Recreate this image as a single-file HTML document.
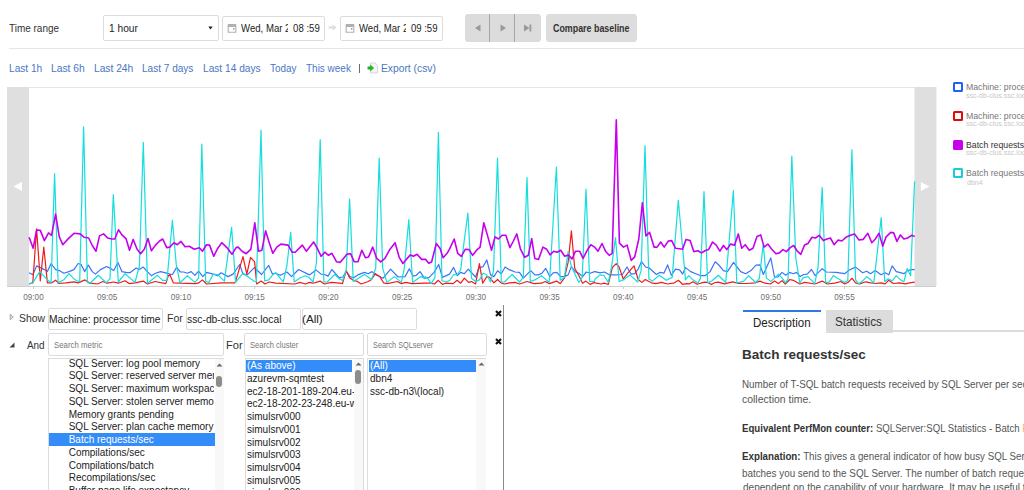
<!DOCTYPE html>
<html><head><meta charset="utf-8">
<style>
*{box-sizing:border-box;margin:0;padding:0}
html,body{width:1024px;height:490px;overflow:hidden;background:#fff}
body{font-family:"Liberation Sans",sans-serif;color:#333;position:relative}
.a{position:absolute}
.t{position:absolute;white-space:nowrap;line-height:1;transform-origin:0 0}
.box{position:absolute;border:1px solid #dcdcdc;border-radius:2px;background:#fff}
</style></head><body>

<!-- header row -->
<div class="box" style="left:103px;top:15px;width:116px;height:26px"></div>
<svg class="a" style="left:208px;top:26px" width="5" height="4" viewBox="0 0 5 4"><path d="M0.3 0.5 L4.7 0.5 L2.5 3.5Z" fill="#222"/></svg>
<div class="box" style="left:222px;top:15.5px;width:103px;height:25px"></div>
<svg class="a" style="left:227px;top:23px" width="10" height="10" viewBox="0 0 10 10"><path d="M1.2 3.5 V9.2 H8.8 V3.5" fill="none" stroke="#b0b0b0" stroke-width="1.1"/><path d="M0.7 1.6 Q0.7 1 1.3 1 H3 Q3.4 0.4 3.9 1 H6.1 Q6.6 0.4 7 1 H8.7 Q9.3 1 9.3 1.6 V3.9 H0.7Z" fill="#b0b0b0"/><rect x="6" y="5.2" width="1.4" height="1.4" fill="#888"/></svg>
<svg class="a" style="left:328px;top:24px" width="9" height="7" viewBox="0 0 9 7"><path d="M0.5 2.5 H4.5 V0.5 L8.5 3.5 L4.5 6.5 V4.5 H0.5Z" fill="#ddd"/></svg>
<div class="box" style="left:339.5px;top:15.5px;width:103.5px;height:25px"></div>
<svg class="a" style="left:345px;top:23px" width="10" height="10" viewBox="0 0 10 10"><path d="M1.2 3.5 V9.2 H8.8 V3.5" fill="none" stroke="#b0b0b0" stroke-width="1.1"/><path d="M0.7 1.6 Q0.7 1 1.3 1 H3 Q3.4 0.4 3.9 1 H6.1 Q6.6 0.4 7 1 H8.7 Q9.3 1 9.3 1.6 V3.9 H0.7Z" fill="#b0b0b0"/><rect x="6" y="5.2" width="1.4" height="1.4" fill="#888"/></svg>
<div class="a" style="left:465px;top:14.3px;width:75.5px;height:27.6px;background:#dcdcdc;border-radius:3px">
  <div class="a" style="left:24px;top:0;width:1px;height:27.5px;background:#a6a6a6"></div>
  <div class="a" style="left:49px;top:0;width:1px;height:27.5px;background:#a6a6a6"></div>
  <svg class="a" style="left:9px;top:9.5px" width="8" height="8" viewBox="0 0 8 8"><path d="M1 4 L6.5 0.5 L6.5 7.5Z" fill="#999"/></svg>
  <svg class="a" style="left:34px;top:9.5px" width="8" height="8" viewBox="0 0 8 8"><path d="M1.5 0.5 L7 4 L1.5 7.5Z" fill="#999"/></svg>
  <svg class="a" style="left:58px;top:9.5px" width="10" height="8" viewBox="0 0 10 8"><path d="M1 0.5 L6.5 4 L1 7.5Z" fill="#999"/><rect x="6.5" y="0.5" width="1.8" height="7" fill="#999"/></svg>
</div>
<div class="a" style="left:546px;top:14.3px;width:91px;height:27.6px;background:#dddddd;border-radius:3px"></div>
<div class="a" style="left:9px;top:48px;width:1015px;height:1px;background:#e6e6e6"></div>

<div class="a" style="left:359px;top:63.5px;width:1px;height:9px;background:#6a6a6a"></div>
<svg class="a" style="left:367px;top:62px" width="12" height="12" viewBox="0 0 12 12"><path d="M3.5 1 H8 L10.5 3.5 V11 H3.5Z" fill="#f4f4f4" stroke="#cfcfcf" stroke-width="0.8"/><path d="M0.8 4.8 H3.3 V3 L6.8 6 L3.3 9 V7.2 H0.8Z" fill="#22b422" stroke="#22b422" stroke-width="0.5" stroke-linejoin="round"/></svg>

<!-- chart -->
<svg class="a" style="left:0;top:0" width="1024" height="310" viewBox="0 0 1024 310">
  <line x1="7" y1="87.5" x2="936" y2="87.5" stroke="#e6e6e6" stroke-width="1"/>
  <rect x="7" y="87" width="22" height="199" fill="#dfdfdf"/>
  <rect x="914.5" y="87" width="22" height="199" fill="#dfdfdf"/>
  <path d="M13.6 186.4 L22 181.7 L22 191.1Z" fill="#fff"/>
  <path d="M929.6 186.4 L920.8 181.9 L920.8 190.9Z" fill="#fff"/>
  <polyline points="29.1,272.7 32.8,274.7 36.6,265.9 40.3,267.6 44.4,269.6 47.4,271.6 51.1,263.5 55.6,269.6 59.3,270.6 63.8,273.3 68.9,271.6 74.0,269.6 78.1,263.5 81.1,264.5 84.6,271.6 88.3,265.1 92.3,271.6 95.4,274.1 100.5,269.6 106.6,266.5 110.7,268.6 113.8,270.6 117.9,262.4 121.9,271.6 127.0,272.7 130.0,272.7 136.1,268.0 139.2,269.6 143.3,267.1 147.3,271.6 151.4,275.7 155.5,273.3 160.6,271.6 164.7,272.7 170.0,274.1 172.5,274.5 176.6,267.4 180.4,272.0 183.7,272.0 187.4,273.2 191.2,271.6 194.9,275.3 198.6,271.2 202.8,276.6 206.5,272.4 213.2,274.1 217.7,275.7 221.0,272.8 228.1,276.6 233.1,274.1 239.7,264.5 243.0,274.1 247.2,274.9 254.6,267.4 255.0,268.3 261.6,274.5 268.7,265.4 272.4,274.1 275.7,273.2 280.3,275.3 287.0,272.0 291.5,276.6 298.6,269.5 309.4,274.9 316.0,269.9 321.0,274.1 324.7,274.5 328.0,276.1 331.8,269.5 339.6,278.2 340.0,277.4 342.9,277.0 346.2,271.2 350.0,276.6 353.7,277.8 357.8,274.9 364.5,272.4 368.2,273.7 372.0,271.6 376.5,275.3 383.2,278.2 390.6,269.1 398.1,277.0 405.1,276.6 409.3,268.7 413.0,276.1 416.3,275.3 420.1,271.6 424.6,278.6 425.0,278.2 429.1,277.4 434.1,272.4 438.7,264.5 442.4,277.4 449.5,274.1 453.6,267.4 457.4,275.7 460.7,272.4 464.4,273.7 468.2,269.1 475.6,277.0 478.9,267.8 483.1,266.6 486.8,260.0 490.6,274.9 493.9,276.6 497.6,270.7 501.3,273.7 505.1,267.0 509.6,269.9 510.0,269.9 515.0,272.0 519.5,272.4 523.3,278.2 530.7,270.7 534.9,274.9 538.2,274.9 542.0,273.2 545.7,268.3 549.8,276.6 553.2,272.8 556.9,272.4 560.6,276.6 564.4,276.6 568.1,274.9 571.4,266.6 575.6,272.0 578.9,273.2 582.6,276.6 586.3,272.0 590.1,273.2 594.6,271.6 595.0,271.6 600.0,272.8 604.5,272.0 609.5,274.9 615.7,274.9 622.4,274.5 627.0,267.0 631.1,274.1 634.8,273.7 638.2,269.1 641.5,261.6 645.6,267.0 648.9,267.8 656.4,274.5 659.7,272.4 663.9,273.2 667.6,264.9 671.3,275.3 675.5,269.1 679.6,269.9 682.6,274.1 685.6,267.6 690.7,271.6 695.8,273.7 700.9,275.7 705.0,275.7 710.1,271.6 715.2,261.8 719.3,265.5 723.4,270.6 727.4,271.6 733.6,262.4 736.6,266.5 740.7,271.6 745.8,273.7 750.9,270.6 756.0,265.1 760.0,264.9 763.3,274.5 770.8,257.9 774.5,277.0 777.8,277.0 782.0,272.4 785.7,275.3 789.5,272.4 793.2,273.7 796.5,272.4 800.2,276.6 803.6,274.5 807.3,274.1 811.5,269.5 815.2,275.7 822.2,268.7 826.4,272.0 836.3,272.4 844.6,273.7 849.4,270.0 855.5,267.1 862.7,272.7 866.7,271.2 870.4,273.7 875.3,270.6 881.0,274.7 885.1,272.7 888.8,274.7 892.2,265.9 896.3,271.6 900.4,272.7 903.9,273.7 907.6,270.6 911.6,269.6 914.7,269.6" fill="none" stroke="#3b74fa" stroke-width="1.2" stroke-linejoin="round"/>
<polyline points="29.1,283.9 32.8,282.9 36.6,228.8 40.3,280.8 43.8,247.1 47.4,282.9 51.5,282.9 55.6,280.2 58.7,283.5 65.8,282.9 74.0,281.8 78.1,282.9 85.0,279.9 90.0,283.2 97.5,284.0 102.8,281.5 107.0,283.2 113.6,282.0 118.3,283.2 125.0,280.7 129.2,283.6 135.0,282.8 143.3,281.1 147.5,284.0 155.0,281.5 165.8,283.6 168.3,275.7 170.0,274.9 173.3,282.8 180.0,283.2 194.9,283.6 198.2,283.2 202.4,279.9 206.5,284.0 221.5,282.8 235.1,282.8 243.0,256.6 246.8,274.1 250.5,257.5 254.6,261.6 256.7,284.0 261.2,281.1 265.0,284.0 269.1,282.0 275.7,283.2 294.8,284.0 299.8,282.4 305.6,284.0 309.4,282.4 313.1,283.2 320.1,281.1 324.3,284.0 331.3,282.4 339.6,283.2 340.0,283.2 342.5,283.6 346.2,270.7 349.5,277.8 353.3,280.3 356.6,281.1 361.2,284.0 368.2,281.5 371.5,279.5 375.3,273.7 379.8,276.6 383.6,282.8 387.3,283.6 397.3,281.5 401.4,283.6 405.6,282.4 412.2,283.6 424.6,283.2 425.0,283.2 430.0,283.2 434.5,284.0 438.3,280.3 442.4,284.4 445.7,283.2 453.2,283.6 457.0,280.3 460.7,283.2 464.4,278.2 468.6,282.4 471.5,281.5 475.6,284.0 479.4,263.7 482.7,283.2 486.8,276.6 489.7,277.4 493.9,282.8 497.6,279.5 501.3,283.2 504.7,284.0 509.6,282.8 510.0,282.8 515.0,282.4 519.5,284.0 527.0,281.5 534.1,283.6 541.5,283.2 545.3,281.5 549.4,283.6 556.5,281.1 560.2,283.6 564.4,278.2 568.1,262.4 571.4,230.8 574.7,268.3 578.9,275.7 582.6,283.2 585.9,281.1 590.1,284.4 594.6,282.4 595.0,282.8 600.8,284.0 604.5,283.2 608.3,284.4 612.4,267.4 616.2,263.7 619.1,267.0 623.2,279.0 627.8,273.2 634.0,265.8 638.2,279.5 641.9,282.4 645.2,279.5 651.4,282.8 656.0,283.6 661.4,282.4 667.6,284.0 674.3,282.8 678.4,280.3 682.5,284.3 686.4,283.6 689.3,283.9 692.9,281.8 697.1,284.3 700.7,283.2 705.0,282.1 707.9,282.5 711.4,284.6 715.0,282.5 718.3,282.2 724.4,283.9 732.6,281.8 738.7,283.5 746.8,283.5 755.0,282.9 760.0,281.1 765.0,283.2 770.4,284.0 774.5,281.1 778.3,283.6 782.0,280.7 785.3,284.0 789.9,279.5 793.2,280.3 799.8,284.0 804.8,282.4 814.8,284.0 822.2,281.1 827.2,284.0 834.7,283.2 840.9,281.5 844.6,284.0 848.4,282.2 852.0,278.2 855.5,282.9 859.6,283.9 865.7,281.8 870.8,282.9 874.9,283.5 881.0,282.9 885.1,283.9 888.8,280.2 893.3,283.5 899.4,282.9 905.5,283.9 909.6,282.9 914.7,282.2" fill="none" stroke="#ee1b1b" stroke-width="1.2" stroke-linejoin="round"/>
<polyline points="29.1,283.9 32.8,282.9 39.7,271.6 47.4,279.8 51.1,282.9 54.6,173.7 58.1,282.9 63.8,279.8 68.9,273.7 75.0,279.8 79.7,281.8 83.6,126.8 87.4,282.6 90.0,283.2 98.3,275.3 106.2,282.8 110.0,278.6 113.3,194.6 118.3,282.0 125.0,273.7 135.0,282.4 139.4,266.0 143.3,142.3 147.5,283.2 157.5,275.3 162.5,280.3 167.0,280.3 172.4,220.2 176.3,265.0 180.0,282.8 187.4,275.7 194.9,282.4 198.6,278.2 201.8,144.0 205.7,281.5 209.0,282.4 213.2,274.1 218.1,274.9 224.4,281.1 231.6,227.3 235.6,282.4 243.0,273.2 254.6,281.5 256.4,281.8 261.0,130.2 264.6,280.8 268.7,279.8 272.8,274.7 275.8,272.7 279.9,277.8 283.2,282.0 287.0,265.0 290.7,232.3 294.2,282.0 300.3,277.8 305.4,275.7 309.5,277.8 313.1,282.0 316.4,263.0 320.2,139.6 323.9,282.0 327.2,282.0 334.7,274.5 339.6,279.0 340.0,278.6 342.5,280.7 346.2,270.7 349.6,199.2 353.3,281.5 364.5,274.5 371.5,279.5 375.7,268.3 379.2,158.2 382.7,268.3 386.9,282.4 394.4,276.6 401.4,282.4 404.3,268.3 408.8,219.6 412.6,282.4 420.9,276.6 424.6,278.2 425.0,276.6 427.9,278.6 431.2,283.6 435.0,277.4 438.4,132.3 442.0,280.7 446.2,282.0 449.9,280.3 453.6,274.5 457.0,274.9 460.7,269.9 464.3,240.0 467.9,213.0 471.5,278.2 475.6,281.5 479.4,279.9 483.1,273.2 486.4,274.5 490.6,282.0 493.5,270.7 497.5,158.2 501.3,282.0 504.7,282.0 509.6,276.6 510.0,276.6 512.1,274.5 519.5,282.0 523.3,277.4 527.0,177.5 530.3,281.5 534.9,279.9 541.5,275.7 549.0,282.4 549.9,275.7 556.4,167.0 560.2,280.3 564.4,277.4 568.1,251.7 571.4,266.6 578.9,282.4 582.2,277.4 586.0,189.2 589.7,281.5 594.6,281.5 595.0,279.0 600.0,274.9 604.1,275.7 608.3,282.4 611.6,266.6 615.5,237.7 619.1,281.5 623.2,279.9 629.9,274.9 637.7,282.0 641.1,270.7 645.0,145.7 648.9,279.0 652.3,281.1 659.3,275.3 666.4,280.3 672.2,277.4 678.3,200.3 685.5,280.0 688.7,275.7 692.8,279.8 697.9,282.9 700.3,278.9 704.0,191.5 707.7,282.9 712.1,280.8 718.3,275.3 725.7,282.5 733.4,190.5 736.8,282.9 743.6,281.4 748.6,275.7 755.7,282.5 759.3,278.6 763.2,244.5 766.4,277.9 770.7,281.4 775.0,277.9 778.4,274.1 782.0,277.8 785.5,282.9 788.1,278.9 791.8,156.1 795.8,258.0 799.8,283.2 802.9,277.8 808.0,276.7 814.8,283.6 818.1,266.6 822.2,187.5 825.6,282.4 828.9,282.4 833.4,275.7 844.6,282.4 847.8,280.8 851.9,149.9 855.6,279.9 858.6,283.9 862.7,280.8 866.7,276.7 870.8,279.8 873.8,283.2 881.2,217.6 884.7,281.4 888.2,278.8 892.2,280.8 896.3,275.7 900.4,279.8 903.9,281.8 907.1,268.6 910.6,275.7 914.6,181.2" fill="none" stroke="#14dede" stroke-width="1.2" stroke-linejoin="round"/>
<polyline points="29.1,237.3 33.2,248.2 36.6,230.0 40.3,230.4 44.4,240.6 48.5,232.9 51.5,235.3 55.6,214.1 59.3,236.9 62.8,244.7 68.3,238.6 74.0,233.3 80.1,233.9 84.2,237.3 88.7,238.0 92.3,245.5 96.0,251.2 99.5,235.9 103.6,233.9 107.7,238.0 111.7,239.0 114.8,239.0 118.5,229.8 121.9,234.9 126.0,238.6 129.5,250.2 133.1,239.4 137.1,249.2 140.6,253.7 144.3,249.2 148.0,238.6 151.4,250.8 155.5,245.1 159.6,241.0 162.7,239.0 166.7,247.6 169.8,247.1 173.9,242.7 177.3,244.7 181.0,241.4 185.1,246.7 189.2,246.3 194.3,249.2 199.4,247.8 202.4,251.2 206.5,244.7 209.6,245.1 213.7,256.3 217.8,248.2 221.8,242.7 226.9,247.6 232.0,254.3 236.1,247.6 238.1,247.1 242.1,251.2 246.2,253.7 250.9,249.2 254.8,222.7 258.5,251.2 261.9,250.2 265.6,230.8 269.3,243.1 272.8,253.3 276.8,247.1 280.9,244.1 288.1,245.1 292.1,252.2 295.2,252.2 302.3,245.1 306.4,251.2 313.6,242.0 317.7,249.2 321.1,256.3 324.8,252.2 328.5,255.3 331.9,253.3 336.6,261.8 340.0,262.4 343.5,258.5 347.1,254.1 350.6,253.7 354.3,261.8 358.0,261.8 361.8,250.2 365.5,257.8 368.6,256.9 372.7,247.1 376.7,258.4 380.8,261.8 384.9,258.4 390.0,249.2 395.1,242.7 399.2,257.3 402.9,263.5 406.3,259.4 410.4,254.9 413.5,256.3 417.1,254.3 421.6,259.4 425.7,259.4 428.7,263.3 431.6,262.0 436.3,243.5 440.0,248.2 443.1,257.8 447.1,253.3 449.5,249.2 454.2,239.0 457.7,253.3 461.3,256.3 465.4,249.2 469.1,249.6 472.6,255.3 476.6,250.2 480.1,247.1 483.8,222.7 487.9,236.9 491.5,250.2 495.0,236.9 498.5,239.0 502.1,235.3 505.8,235.3 509.9,247.6 513.4,241.0 516.8,233.9 520.5,249.2 524.6,257.3 528.3,255.3 531.7,238.6 534.8,258.4 538.5,259.4 543.0,247.1 546.6,249.2 550.1,254.9 553.7,251.2 557.1,252.2 560.6,250.2 564.7,256.3 568.4,254.9 572.0,259.0 575.5,251.2 579.6,251.2 583.1,258.4 586.7,251.2 590.8,244.7 594.5,247.1 598.0,251.2 602.0,243.5 605.5,251.2 609.2,255.3 612.2,253.3 616.3,119.7 619.4,243.1 623.5,247.1 627.1,245.1 631.2,260.4 634.7,256.9 638.8,239.0 642.4,202.7 645.9,235.9 649.6,232.4 654.1,247.1 657.1,247.1 660.7,242.0 664.2,247.1 668.3,241.0 671.7,240.6 675.4,248.2 679.5,248.8 682.6,249.2 686.0,239.4 690.1,240.6 693.8,251.6 697.9,250.8 701.5,252.9 705.0,250.8 708.5,249.6 712.6,242.0 716.2,245.1 719.9,251.2 723.4,245.5 726.8,249.6 730.5,244.1 734.6,245.1 738.3,233.9 741.7,248.2 745.2,244.7 749.3,250.2 753.0,248.2 757.0,236.5 760.7,234.9 764.1,247.1 767.8,244.1 771.8,249.2 775.9,253.7 779.4,252.9 782.9,249.6 786.5,251.6 790.2,247.6 793.7,245.5 797.1,250.8 800.8,254.3 804.5,245.1 808.0,243.5 812.0,237.3 815.5,238.0 819.2,235.3 823.3,240.6 826.9,239.0 830.4,238.0 834.1,244.7 838.2,240.0 841.8,241.0 845.9,237.3 850.4,235.3 854.5,233.9 859.0,240.0 863.1,239.4 867.8,233.3 871.8,242.7 875.3,239.0 879.0,233.3 882.7,246.1 886.1,236.9 890.8,232.4 893.7,232.9 896.9,241.4 900.4,234.9 903.9,239.0 907.6,238.0 911.6,235.3 914.7,236.5" fill="none" stroke="#c600ee" stroke-width="1.6" stroke-linejoin="round"/>
  <line x1="7" y1="286.5" x2="936" y2="286.5" stroke="#d0d0d0" stroke-width="1"/>
  <line x1="33.5" y1="286" x2="33.5" y2="289" stroke="#ccc" stroke-width="1"/><line x1="107.2" y1="286" x2="107.2" y2="289" stroke="#ccc" stroke-width="1"/><line x1="181.0" y1="286" x2="181.0" y2="289" stroke="#ccc" stroke-width="1"/><line x1="254.7" y1="286" x2="254.7" y2="289" stroke="#ccc" stroke-width="1"/><line x1="328.4" y1="286" x2="328.4" y2="289" stroke="#ccc" stroke-width="1"/><line x1="402.2" y1="286" x2="402.2" y2="289" stroke="#ccc" stroke-width="1"/><line x1="475.9" y1="286" x2="475.9" y2="289" stroke="#ccc" stroke-width="1"/><line x1="549.6" y1="286" x2="549.6" y2="289" stroke="#ccc" stroke-width="1"/><line x1="623.3" y1="286" x2="623.3" y2="289" stroke="#ccc" stroke-width="1"/><line x1="697.1" y1="286" x2="697.1" y2="289" stroke="#ccc" stroke-width="1"/><line x1="770.8" y1="286" x2="770.8" y2="289" stroke="#ccc" stroke-width="1"/><line x1="844.5" y1="286" x2="844.5" y2="289" stroke="#ccc" stroke-width="1"/>
  <g font-family="Liberation Sans" font-size="9" fill="#6f6f6f"><text x="23.3" y="300.2" textLength="20.4" lengthAdjust="spacingAndGlyphs">09:00</text><text x="97.0" y="300.2" textLength="20.4" lengthAdjust="spacingAndGlyphs">09:05</text><text x="170.8" y="300.2" textLength="20.4" lengthAdjust="spacingAndGlyphs">09:10</text><text x="244.5" y="300.2" textLength="20.4" lengthAdjust="spacingAndGlyphs">09:15</text><text x="318.2" y="300.2" textLength="20.4" lengthAdjust="spacingAndGlyphs">09:20</text><text x="392.0" y="300.2" textLength="20.4" lengthAdjust="spacingAndGlyphs">09:25</text><text x="465.7" y="300.2" textLength="20.4" lengthAdjust="spacingAndGlyphs">09:30</text><text x="539.4" y="300.2" textLength="20.4" lengthAdjust="spacingAndGlyphs">09:35</text><text x="613.1" y="300.2" textLength="20.4" lengthAdjust="spacingAndGlyphs">09:40</text><text x="686.9" y="300.2" textLength="20.4" lengthAdjust="spacingAndGlyphs">09:45</text><text x="760.6" y="300.2" textLength="20.4" lengthAdjust="spacingAndGlyphs">09:50</text><text x="834.3" y="300.2" textLength="20.4" lengthAdjust="spacingAndGlyphs">09:55</text></g>
</svg>

<!-- legend squares -->
<div class="a" style="left:953px;top:81.5px;width:10px;height:10px;border:2px solid #1f5ffb;border-radius:1.5px"></div>
<div class="a" style="left:953px;top:110.5px;width:10px;height:10px;border:2px solid #e00a0a;border-radius:1.5px"></div>
<div class="a" style="left:953px;top:139.5px;width:10px;height:10px;background:#c800ec;border-radius:1.5px"></div>
<div class="a" style="left:953px;top:168px;width:10px;height:10px;border:2px solid #12d0d6;border-radius:1.5px"></div>

<!-- show row -->
<svg class="a" style="left:9px;top:313px" width="6" height="8" viewBox="0 0 6 8"><path d="M1.2 1.2 L4.3 4 L1.2 6.8Z" fill="#ddd" stroke="#999" stroke-width="0.8"/></svg>
<div class="box" style="left:48px;top:307.6px;width:115px;height:22.8px"></div>
<div class="box" style="left:186px;top:307.6px;width:115px;height:22.8px"></div>
<div class="box" style="left:302px;top:307.6px;width:115px;height:22.8px"></div>
<svg class="a" style="left:493.5px;top:309px" width="9" height="9" viewBox="0 0 9 9"><path d="M2 2 L7 7 M7 2 L2 7" stroke="#111" stroke-width="2.1"/></svg>
<div class="a" style="left:503px;top:304.5px;width:1px;height:186px;background:#8a8a8a"></div>

<!-- and row -->
<svg class="a" style="left:8.7px;top:341.5px" width="6" height="6" viewBox="0 0 6 6"><path d="M0.5 5.5 L5.5 5.5 L5.5 0.5Z" fill="#444"/></svg>
<div class="box" style="left:48px;top:333px;width:176px;height:22.5px"></div>
<div class="box" style="left:244px;top:333px;width:119.5px;height:22.5px"></div>
<div class="box" style="left:367px;top:333px;width:119.5px;height:22.5px"></div>
<svg class="a" style="left:493.5px;top:336.8px" width="9" height="9" viewBox="0 0 9 9"><path d="M2 2 L7 7 M7 2 L2 7" stroke="#111" stroke-width="2.1"/></svg>

<!-- lists -->
<div class="box" style="left:48px;top:358px;width:176px;height:140px;border-radius:0">
  <div class="a" style="left:0;top:74.2px;width:165.5px;height:12.4px;background:#348cf8"></div>
  <div class="a" style="left:165.5px;top:0;width:9px;height:140px;background:#f8f8f8"></div>
  <svg class="a" style="left:166.5px;top:3.5px" width="7" height="4" viewBox="0 0 7 4"><path d="M0.5 3.5 L3.5 0.5 L6.5 3.5Z" fill="#666"/></svg>
  <div class="a" style="left:167px;top:17px;width:6px;height:11px;background:#8c8c8c;border-radius:3px"></div>
</div>
<div class="box" style="left:245px;top:358px;width:119px;height:140px;border-radius:0">
  <div class="a" style="left:0;top:0.5px;width:106.2px;height:12.5px;background:#348cf8"></div>
  <div class="a" style="left:108.3px;top:0;width:9px;height:140px;background:#f8f8f8"></div>
  <svg class="a" style="left:109.3px;top:3.3px" width="7" height="4" viewBox="0 0 7 4"><path d="M0.5 3.5 L3.5 0.5 L6.5 3.5Z" fill="#666"/></svg>
  <div class="a" style="left:109.4px;top:10.8px;width:5.8px;height:14.5px;background:#8c8c8c;border-radius:3px"></div>
</div>
<div class="box" style="left:367px;top:358px;width:119px;height:140px;border-radius:0">
  <div class="a" style="left:0.5px;top:0.7px;width:107px;height:12.3px;background:#348cf8"></div>
  <div class="a" style="left:107.5px;top:0;width:10.5px;height:140px;background:#f8f8f8"></div>
  <svg class="a" style="left:110.3px;top:3.3px" width="7" height="4" viewBox="0 0 7 4"><path d="M0.5 3.5 L3.5 0.5 L6.5 3.5Z" fill="#666"/></svg>
</div>

<!-- right panel: tabs -->
<div class="a" style="left:743px;top:309.7px;width:78px;height:2.4px;background:#2f7ae0"></div>
<div class="a" style="left:825.7px;top:309.7px;width:67.5px;height:23.5px;background:#dcdcdc"></div>
<div class="a" style="left:893px;top:329.7px;width:131px;height:2px;background:#dcdcdc"></div>

<div class="t" style="left:9.10px;top:22.90px;font-size:11px;font-weight:normal;color:#333;transform:scaleX(0.9055)">Time range</div>
<div class="t" style="left:109.07px;top:22.90px;font-size:11px;font-weight:normal;color:#222;transform:scaleX(0.9267)">1 hour</div>
<div class="t" style="left:241.40px;top:23.20px;font-size:11px;font-weight:normal;color:#222;transform:scaleX(0.8722)">Wed, Mar 2 08 :59</div>
<div class="t" style="left:359.10px;top:23.20px;font-size:11px;font-weight:normal;color:#222;transform:scaleX(0.8689)">Wed, Mar 2 09 :59</div>
<div class="t" style="left:553.30px;top:23.30px;font-size:10.5px;font-weight:bold;color:#333;transform:scaleX(0.8456)">Compare baseline</div>
<div class="t" style="left:8.88px;top:62.80px;font-size:11px;font-weight:normal;color:#4a76c4;transform:scaleX(0.9200)">Last 1h</div>
<div class="t" style="left:51.37px;top:62.80px;font-size:11px;font-weight:normal;color:#4a76c4;transform:scaleX(0.9343)">Last 6h</div>
<div class="t" style="left:94.17px;top:62.80px;font-size:11px;font-weight:normal;color:#4a76c4;transform:scaleX(0.9293)">Last 24h</div>
<div class="t" style="left:142.29px;top:62.80px;font-size:11px;font-weight:normal;color:#4a76c4;transform:scaleX(0.9127)">Last 7 days</div>
<div class="t" style="left:202.58px;top:62.80px;font-size:11px;font-weight:normal;color:#4a76c4;transform:scaleX(0.9230)">Last 14 days</div>
<div class="t" style="left:270.00px;top:62.80px;font-size:11px;font-weight:normal;color:#4a76c4;transform:scaleX(0.9000)">Today</div>
<div class="t" style="left:306.30px;top:62.80px;font-size:11px;font-weight:normal;color:#4a76c4;transform:scaleX(0.9061)">This week</div>
<div class="t" style="left:380.76px;top:62.80px;font-size:11px;font-weight:normal;color:#4a76c4;transform:scaleX(0.9351)">Export (csv)</div>
<div class="t" style="left:965.88px;top:81.90px;font-size:9.5px;font-weight:normal;color:#777;transform:scaleX(0.9176)">Machine: processor time</div>
<div class="t" style="left:965.86px;top:91.60px;font-size:7.5px;font-weight:normal;color:#c8c8c8;transform:scaleX(0.9432)">ssc-db-clus.ssc.local</div>
<div class="t" style="left:965.88px;top:110.70px;font-size:9.5px;font-weight:normal;color:#777;transform:scaleX(0.9176)">Machine: processor time</div>
<div class="t" style="left:965.86px;top:120.40px;font-size:7.5px;font-weight:normal;color:#c8c8c8;transform:scaleX(0.9432)">ssc-db-clus.ssc.local</div>
<div class="t" style="left:965.88px;top:139.50px;font-size:9.5px;font-weight:normal;color:#333;transform:scaleX(0.9176)">Batch requests/sec</div>
<div class="t" style="left:965.86px;top:149.20px;font-size:7.5px;font-weight:normal;color:#c8c8c8;transform:scaleX(0.9432)">ssc-db-clus.ssc.local</div>
<div class="t" style="left:965.88px;top:168.30px;font-size:9.5px;font-weight:normal;color:#777;transform:scaleX(0.9176)">Batch requests/sec</div>
<div class="t" style="left:966.80px;top:179.00px;font-size:7.5px;font-weight:normal;color:#c8c8c8;transform:scaleX(0.9432)">dbn4</div>
<div class="t" style="left:18.75px;top:312.90px;font-size:11px;font-weight:normal;color:#333;transform:scaleX(0.9462)">Show</div>
<div class="t" style="left:49.43px;top:314.00px;font-size:10.5px;font-weight:normal;color:#222;transform:scaleX(0.9743)">Machine: processor time</div>
<div class="t" style="left:166.64px;top:313.00px;font-size:11px;font-weight:normal;color:#333;transform:scaleX(0.9600)">For</div>
<div class="t" style="left:187.12px;top:313.80px;font-size:10.5px;font-weight:normal;color:#222;transform:scaleX(0.9811)">ssc-db-clus.ssc.local</div>
<div class="t" style="left:302.39px;top:313.80px;font-size:10.5px;font-weight:normal;color:#222;transform:scaleX(1.1118)">(All)</div>
<div class="t" style="left:27.00px;top:340.40px;font-size:11px;font-weight:normal;color:#333;transform:scaleX(0.9000)">And</div>
<div class="t" style="left:54.09px;top:341.30px;font-size:8.6px;font-weight:normal;color:#777;transform:scaleX(0.9118)">Search metric</div>
<div class="t" style="left:226.49px;top:340.40px;font-size:11px;font-weight:normal;color:#333;transform:scaleX(1.0067)">For</div>
<div class="t" style="left:249.82px;top:341.30px;font-size:8.6px;font-weight:normal;color:#777;transform:scaleX(0.8796)">Search cluster</div>
<div class="t" style="left:372.95px;top:341.30px;font-size:8.6px;font-weight:normal;color:#777;transform:scaleX(0.8507)">Search SQLserver</div>
<div style="position:absolute;left:49px;top:359px;width:164.7px;height:131px;overflow:hidden"><div class="t" style="left:19.70px;top:-0.50px;font-size:10px;font-weight:normal;color:#222;transform:scaleX(1.0000)">SQL Server: log pool memory</div></div>
<div style="position:absolute;left:49px;top:359px;width:164.7px;height:131px;overflow:hidden"><div class="t" style="left:19.70px;top:12.25px;font-size:10px;font-weight:normal;color:#222;transform:scaleX(1.0000)">SQL Server: reserved server memory</div></div>
<div style="position:absolute;left:49px;top:359px;width:164.7px;height:131px;overflow:hidden"><div class="t" style="left:19.70px;top:25.00px;font-size:10px;font-weight:normal;color:#222;transform:scaleX(1.0000)">SQL Server: maximum workspace memory</div></div>
<div style="position:absolute;left:49px;top:359px;width:164.7px;height:131px;overflow:hidden"><div class="t" style="left:19.70px;top:37.75px;font-size:10px;font-weight:normal;color:#222;transform:scaleX(1.0000)">SQL Server: stolen server memory</div></div>
<div style="position:absolute;left:49px;top:359px;width:164.7px;height:131px;overflow:hidden"><div class="t" style="left:19.70px;top:50.50px;font-size:10px;font-weight:normal;color:#222;transform:scaleX(1.0000)">Memory grants pending</div></div>
<div style="position:absolute;left:49px;top:359px;width:164.7px;height:131px;overflow:hidden"><div class="t" style="left:19.70px;top:63.25px;font-size:10px;font-weight:normal;color:#222;transform:scaleX(1.0000)">SQL Server: plan cache memory</div></div>
<div style="position:absolute;left:49px;top:359px;width:164.7px;height:131px;overflow:hidden"><div class="t" style="left:19.70px;top:76.00px;font-size:10px;font-weight:normal;color:#fff;transform:scaleX(1.0000)">Batch requests/sec</div></div>
<div style="position:absolute;left:49px;top:359px;width:164.7px;height:131px;overflow:hidden"><div class="t" style="left:19.70px;top:88.75px;font-size:10px;font-weight:normal;color:#222;transform:scaleX(1.0000)">Compilations/sec</div></div>
<div style="position:absolute;left:49px;top:359px;width:164.7px;height:131px;overflow:hidden"><div class="t" style="left:19.70px;top:101.50px;font-size:10px;font-weight:normal;color:#222;transform:scaleX(1.0000)">Compilations/batch</div></div>
<div style="position:absolute;left:49px;top:359px;width:164.7px;height:131px;overflow:hidden"><div class="t" style="left:19.70px;top:114.25px;font-size:10px;font-weight:normal;color:#222;transform:scaleX(1.0000)">Recompilations/sec</div></div>
<div style="position:absolute;left:49px;top:359px;width:164.7px;height:131px;overflow:hidden"><div class="t" style="left:19.70px;top:127.00px;font-size:10px;font-weight:normal;color:#222;transform:scaleX(1.0000)">Buffer page life expectancy</div></div>
<div style="position:absolute;left:245.5px;top:359px;width:108.30000000000001px;height:131px;overflow:hidden"><div class="t" style="left:1.20px;top:2.30px;font-size:10px;font-weight:normal;color:#fff;transform:scaleX(1.0039)">(As above)</div></div>
<div style="position:absolute;left:245.5px;top:359px;width:108.30000000000001px;height:131px;overflow:hidden"><div class="t" style="left:1.20px;top:15.00px;font-size:10px;font-weight:normal;color:#222;transform:scaleX(1.0039)">azurevm-sqmtest</div></div>
<div style="position:absolute;left:245.5px;top:359px;width:108.30000000000001px;height:131px;overflow:hidden"><div class="t" style="left:1.20px;top:27.70px;font-size:10px;font-weight:normal;color:#222;transform:scaleX(1.0039)">ec2-18-201-189-204.eu-west-1</div></div>
<div style="position:absolute;left:245.5px;top:359px;width:108.30000000000001px;height:131px;overflow:hidden"><div class="t" style="left:1.20px;top:40.40px;font-size:10px;font-weight:normal;color:#222;transform:scaleX(1.0039)">ec2-18-202-23-248.eu-west-1</div></div>
<div style="position:absolute;left:245.5px;top:359px;width:108.30000000000001px;height:131px;overflow:hidden"><div class="t" style="left:1.20px;top:53.10px;font-size:10px;font-weight:normal;color:#222;transform:scaleX(1.0039)">simulsrv000</div></div>
<div style="position:absolute;left:245.5px;top:359px;width:108.30000000000001px;height:131px;overflow:hidden"><div class="t" style="left:1.20px;top:65.80px;font-size:10px;font-weight:normal;color:#222;transform:scaleX(1.0039)">simulsrv001</div></div>
<div style="position:absolute;left:245.5px;top:359px;width:108.30000000000001px;height:131px;overflow:hidden"><div class="t" style="left:1.20px;top:78.50px;font-size:10px;font-weight:normal;color:#222;transform:scaleX(1.0039)">simulsrv002</div></div>
<div style="position:absolute;left:245.5px;top:359px;width:108.30000000000001px;height:131px;overflow:hidden"><div class="t" style="left:1.20px;top:91.20px;font-size:10px;font-weight:normal;color:#222;transform:scaleX(1.0039)">simulsrv003</div></div>
<div style="position:absolute;left:245.5px;top:359px;width:108.30000000000001px;height:131px;overflow:hidden"><div class="t" style="left:1.20px;top:103.90px;font-size:10px;font-weight:normal;color:#222;transform:scaleX(1.0039)">simulsrv004</div></div>
<div style="position:absolute;left:245.5px;top:359px;width:108.30000000000001px;height:131px;overflow:hidden"><div class="t" style="left:1.20px;top:116.60px;font-size:10px;font-weight:normal;color:#222;transform:scaleX(1.0039)">simulsrv005</div></div>
<div style="position:absolute;left:245.5px;top:359px;width:108.30000000000001px;height:131px;overflow:hidden"><div class="t" style="left:1.20px;top:129.30px;font-size:10px;font-weight:normal;color:#222;transform:scaleX(1.0039)">simulsrv006</div></div>
<div class="t" style="left:369.60px;top:361.30px;font-size:10px;font-weight:normal;color:#fff;transform:scaleX(1.0039)">(All)</div>
<div class="t" style="left:369.60px;top:374.00px;font-size:10px;font-weight:normal;color:#222;transform:scaleX(1.0039)">dbn4</div>
<div class="t" style="left:369.60px;top:386.70px;font-size:10px;font-weight:normal;color:#222;transform:scaleX(1.0039)">ssc-db-n3\(local)</div>
<div class="t" style="left:753.44px;top:317.00px;font-size:12px;font-weight:normal;color:#222;transform:scaleX(0.9586)">Description</div>
<div class="t" style="left:835.42px;top:316.20px;font-size:12px;font-weight:normal;color:#333;transform:scaleX(0.9766)">Statistics</div>
<div class="t" style="left:742.06px;top:348.40px;font-size:13px;font-weight:bold;color:#333;transform:scaleX(1.0390)">Batch requests/sec</div>
<div class="t" style="left:742.36px;top:378.90px;font-size:10.5px;font-weight:normal;color:#555;transform:scaleX(0.9359)">Number of T-SQL batch requests received by SQL Server per second, averaged over the</div>
<div class="t" style="left:742.30px;top:393.90px;font-size:10.5px;font-weight:normal;color:#555;transform:scaleX(0.9956)">collection time.</div>
<div class="t" style="left:742.38px;top:423.00px;font-size:10.5px;font-weight:normal;color:#555;transform:scaleX(0.9179)"><b style="color:#333">Equivalent PerfMon counter:</b> SQLServer:SQL Statistics - Batch <span style="color:#f8b37c">Requests/sec</span></div>
<div class="t" style="left:742.37px;top:451.30px;font-size:10.5px;font-weight:normal;color:#555;transform:scaleX(0.9299)"><b style="color:#333">Explanation:</b> This gives a general indicator of how busy SQL Server is based on the number of</div>
<div class="t" style="left:742.36px;top:467.50px;font-size:10.5px;font-weight:normal;color:#555;transform:scaleX(0.9379)">batches you send to the SQL Server. The number of batch requests SQL Server can handle is</div>
<div class="t" style="left:743.30px;top:482.30px;font-size:10.5px;font-weight:normal;color:#555;transform:scaleX(0.9550)">dependent on the capability of your hardware. It may be useful to compare it with other</div>
<div class="a" style="left:288.4px;top:22px;width:2.6px;height:12px;background:#fff"></div>
<div class="a" style="left:406.2px;top:22px;width:2.6px;height:12px;background:#fff"></div>

</body></html>
